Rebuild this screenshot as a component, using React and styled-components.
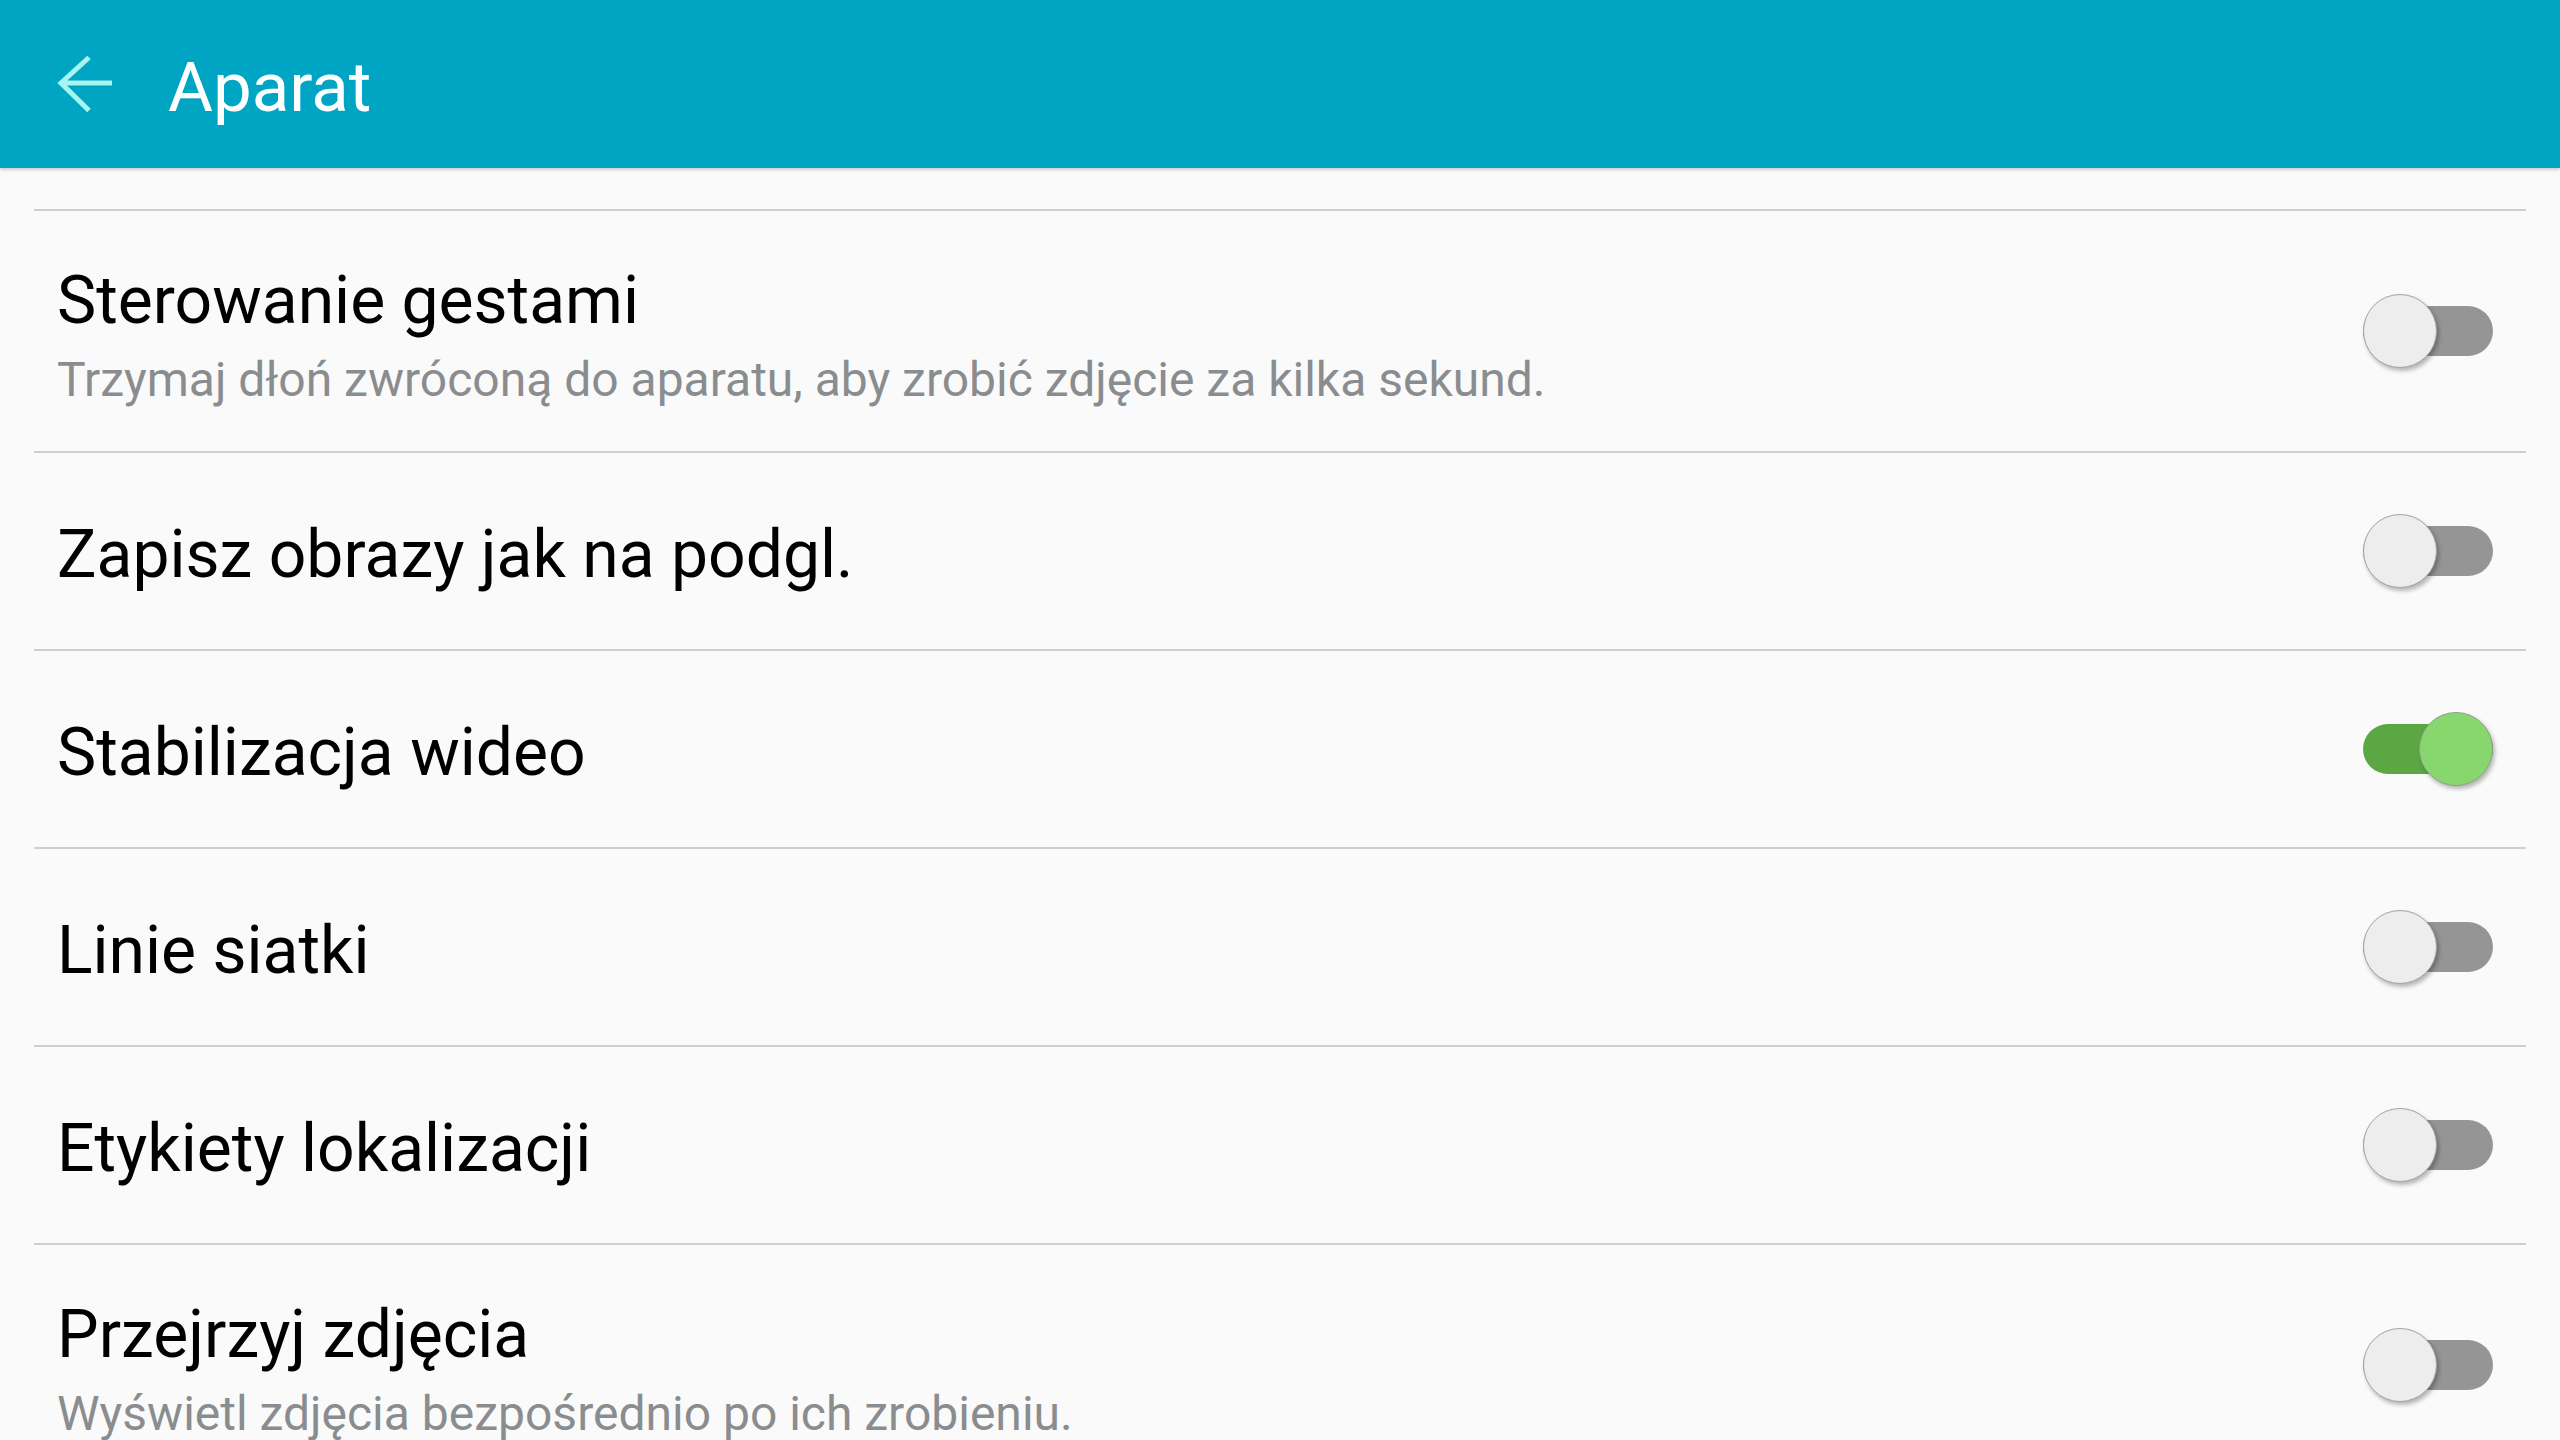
import React, { useState } from 'react';
import styled, { createGlobalStyle } from 'styled-components';

const GlobalStyle = createGlobalStyle`
    html, body {
        margin: 0;
        padding: 0;
        background: #fafafa;
        overflow: hidden;
    }
    body {
        font-family: Roboto, 'Noto Sans', sans-serif;
    }
`;

const Page = styled.div`
    width: 2560px;
    min-height: 1440px;
    background: #fafafa;
`;

const Header = styled.header`
    height: 168px;
    background: #00a5c4;
    display: flex;
    align-items: center;
    padding-left: 57px;
    box-shadow: 0 2px 3px rgba(0, 0, 0, 0.18);
    position: relative;
    z-index: 1;
`;

const BackButton = styled.button`
    width: 56px;
    height: 56px;
    padding: 0;
    border: 0;
    background: transparent;
    display: flex;
    cursor: pointer;
`;

const HeaderTitle = styled.h1`
    margin: 7px 0 0 55px;
    font-size: 69px;
    line-height: 80px;
    font-weight: 400;
    color: #ffffff;
`;

const List = styled.div`
    padding: 41px 34px 0;
`;

// jeden wiersz ustawień - wysokość zależy od tego czy jest opis
const Row = styled.div`
    display: flex;
    align-items: center;
    justify-content: space-between;
    box-sizing: content-box;
    height: ${props => (props.withDesc ? '240px' : '196px')};
    border-top: 2px solid #cfcfcf;
    padding: 0 33px 0 23px;
`;

const TextBlock = styled.div`
    display: flex;
    flex-direction: column;
    padding-top: 8px; /* tekst siedzi trochę niżej niż środek wiersza */
`;

const Title = styled.div`
    font-size: 66px;
    line-height: 80px;
    color: #000000;
`;

const Desc = styled.div`
    margin-top: 9px;
    font-size: 48px;
    line-height: 60px;
    color: #8a8d8f;
`;

const Switch = styled.div`
    position: relative;
    width: 130px;
    height: 74px;
    display: flex;
    align-items: center;
    flex-shrink: 0;
    cursor: pointer;
`;

const Track = styled.div`
    width: 100%;
    height: 50px;
    border-radius: 25px;
    background: ${props => (props.on ? '#5aa744' : '#959595')};
`;

const Thumb = styled.div`
    position: absolute;
    top: 0;
    left: ${props => (props.on ? '56px' : '0')};
    width: 74px;
    height: 74px;
    box-sizing: border-box;
    border-radius: 50%;
    border: 1.5px solid ${props => (props.on ? '#8fa08a' : '#a4a4a4')};
    background: ${props => (props.on ? '#88d66e' : '#ededed')};
    box-shadow: 2px 3px 4px rgba(0, 0, 0, 0.28);
`;

const settings = [
    {
        id: 1,
        title: 'Sterowanie gestami',
        desc: 'Trzymaj dłoń zwróconą do aparatu, aby zrobić zdjęcie za kilka sekund.',
        on: false,
    },
    { id: 2, title: 'Zapisz obrazy jak na podgl.', on: false },
    { id: 3, title: 'Stabilizacja wideo', on: true },
    { id: 4, title: 'Linie siatki', on: false },
    { id: 5, title: 'Etykiety lokalizacji', on: false },
    {
        id: 6,
        title: 'Przejrzyj zdjęcia',
        desc: 'Wyświetl zdjęcia bezpośrednio po ich zrobieniu.',
        on: false,
    },
];

const BackArrow = () => (
    <svg width='56' height='56' viewBox='0 0 56 56'>
        <path d='M55 27H4M32 1.5L4 27L32 54.5' fill='none' stroke='#a8f4ee' strokeWidth='5' />
    </svg>
);

const App = () => {
    const [items, setItems] = useState(settings);

    const toggle = id => {
        setItems(items.map(item => (item.id === id ? { ...item, on: !item.on } : item)));
    };

    return (
        <Page>
            <GlobalStyle />
            <Header>
                <BackButton aria-label='Wstecz'>
                    <BackArrow />
                </BackButton>
                <HeaderTitle>Aparat</HeaderTitle>
            </Header>
            <List>
                {items.map(item => (
                    <Row key={item.id} withDesc={!!item.desc}>
                        <TextBlock>
                            <Title>{item.title}</Title>
                            {item.desc && <Desc>{item.desc}</Desc>}
                        </TextBlock>
                        <Switch onClick={() => toggle(item.id)}>
                            <Track on={item.on} />
                            <Thumb on={item.on} />
                        </Switch>
                    </Row>
                ))}
            </List>
        </Page>
    );
};

export default App;
